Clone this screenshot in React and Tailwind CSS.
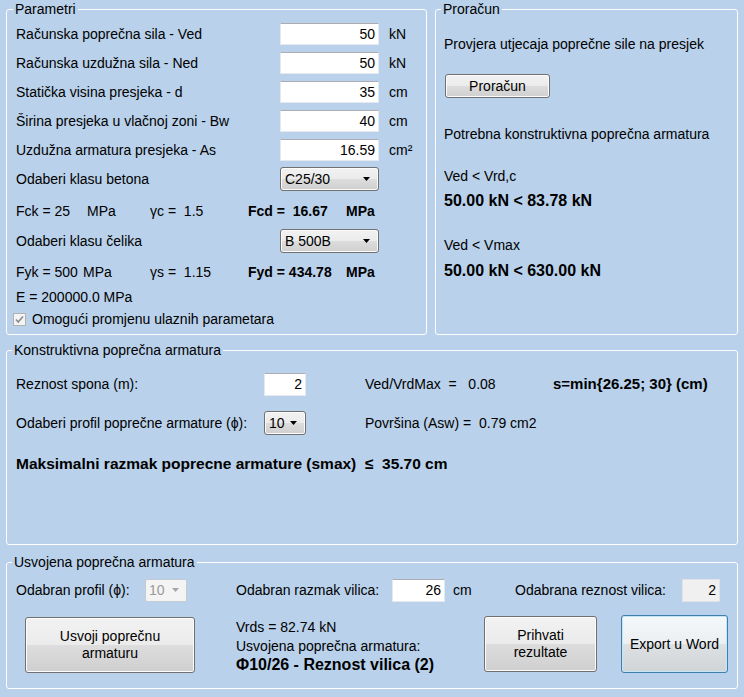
import React from "react";

const btn =
  "rounded-[3px] border border-[#707070] bg-[linear-gradient(to_bottom,#f2f2f2_0%,#ebebeb_50%,#dddddd_50%,#cfcfcf_100%)] shadow-[inset_0_0_0_1px_#fcfcfc]";

function Arrow({ grey }) {
  return (
    <svg width="7" height="4" viewBox="0 0 7 4">
      <path d="M0 0h7L3.5 4z" fill={grey ? "#a6a6a6" : "#000"} />
    </svg>
  );
}

function Combo({ value, className }) {
  return (
    <div className={`${btn} ${className} flex h-[24px] items-center justify-between pl-[4px] pr-[8px]`}>
      <span>{value}</span>
      <Arrow />
    </div>
  );
}

function Field({ value, className }) {
  return (
    <div
      className={`flex items-center justify-end border border-[#e3e9ef] border-t-[#abadb3] bg-white pr-[3px] ${className}`}
    >
      {value}
    </div>
  );
}

function Group({ title, className, legendClass, children }) {
  return (
    <fieldset className={`rounded-[3px] border border-white ${className}`}>
      <legend className={`px-[2px] leading-[16px] ${legendClass}`}>{title}</legend>
      {children}
    </fieldset>
  );
}

const params = [
  ["Računska poprečna sila - Ved", "50", "kN"],
  ["Računska uzdužna sila - Ned", "50", "kN"],
  ["Statička visina presjeka - d", "35", "cm"],
  ["Širina presjeka u vlačnoj zoni - Bw", "40", "cm"],
  ["Uzdužna armatura presjeka - As", "16.59", "cm²"],
];

export default function App() {
  return (
    <div className="h-[697px] w-[744px] overflow-hidden bg-[#b9d1ea] px-[6px] pt-[1px] font-['Liberation_Sans',Arial,sans-serif] text-[14px] leading-[16px] text-black">
      <div className="flex gap-[8px]">
        {/* Parametri */}
        <Group title="Parametri" className="h-[334px] w-[421px] pl-[9px]" legendClass="ml-[-3px]">
          <div className="mt-[2px]">
            {params.map(([label, val, unit]) => (
              <div key={label} className="flex h-[29px] items-center">
                <span className="w-[264px] whitespace-nowrap">{label}</span>
                <Field value={val} className="h-[22px] w-[99px]" />
                <span className="ml-[10px]">{unit}</span>
              </div>
            ))}
            <div className="flex h-[30px] items-center">
              <span className="w-[264px]">Odaberi klasu betona</span>
              <Combo value="C25/30" className="w-[99px]" />
            </div>
            <div className="flex h-[34px] items-center whitespace-pre">
              <span className="w-[71px]">Fck = 25</span>
              <span className="w-[63px]">MPa</span>
              <span className="w-[98px]">γc =  1.5</span>
              <span className="w-[98px] font-bold">Fcd =  16.67</span>
              <span className="font-bold">MPa</span>
            </div>
            <div className="flex h-[26px] items-center">
              <span className="w-[264px]">Odaberi klasu čelika</span>
              <Combo value="B 500B" className="w-[99px]" />
            </div>
            <div className="flex h-[36px] items-center whitespace-pre">
              <span className="w-[67px]">Fyk = 500</span>
              <span className="w-[67px]">MPa</span>
              <span className="w-[98px]">γs =  1.15</span>
              <span className="w-[98px] font-bold">Fyd = 434.78</span>
              <span className="font-bold">MPa</span>
            </div>
            <div className="flex h-[14px] items-center">E = 200000.0 MPa</div>
            <div className="flex h-[30px] items-center">
              <div className="ml-[-3px] flex h-[13px] w-[13px] items-center justify-center border border-[#b1b1b1] bg-[#f4f4f4]">
                <svg width="9" height="9" viewBox="0 0 9 9">
                  <path d="M1 4.5l2.2 2.5L8 1.5" fill="none" stroke="#8a8a8a" strokeWidth="1.6" />
                </svg>
              </div>
              <span className="ml-[6px]">Omogući promjenu ulaznih parametara</span>
            </div>
          </div>
        </Group>

        {/* Proračun */}
        <Group title="Proračun" className="h-[334px] w-[303px] pl-[8px]" legendClass="ml-[-3px]">
          <div className="mt-[19px]">Provjera utjecaja poprečne sile na presjek</div>
          <div className={`${btn} ml-[1px] mt-[22px] flex h-[24px] w-[105px] items-center justify-center`}>
            Proračun
          </div>
          <div className="mt-[28px]">Potrebna konstruktivna poprečna armatura</div>
          <div className="mt-[26px]">Ved &lt; Vrd,c</div>
          <div className="mt-[8px] text-[16px] font-bold leading-[18px]">50.00 kN &lt; 83.78 kN</div>
          <div className="mt-[27px]">Ved &lt; Vmax</div>
          <div className="mt-[9px] text-[16px] font-bold leading-[18px]">50.00 kN &lt; 630.00 kN</div>
        </Group>
      </div>

      {/* Konstruktivna */}
      <Group
        title="Konstruktivna poprečna armatura"
        className="mt-[7px] h-[203px] w-[732px] pl-[9px]"
        legendClass="ml-[-4px]"
      >
        <div className="mt-[13px] flex h-[26px] items-center whitespace-pre">
          <span className="w-[248px]">Reznost spona (m):</span>
          <Field value="2" className="h-[23px] w-[42px]" />
          <span className="ml-[59px] w-[188px]">Ved/VrdMax  =   0.08</span>
          <span className="text-[15px] font-bold">s=min{"{"}26.25; 30{"}"} (cm)</span>
        </div>
        <div className="mt-[13px] flex h-[26px] items-center whitespace-pre">
          <span className="w-[248px]">Odaberi profil poprečne armature (ϕ):</span>
          <Combo value="10" className="w-[42px]" />
          <span className="ml-[59px]">Površina (Asw) =  0.79 cm2</span>
        </div>
        <div className="mt-[18px] flex h-[20px] items-center whitespace-pre text-[15.5px] font-bold">
          Maksimalni razmak poprecne armature (smax)  ≤  35.70 cm
        </div>
      </Group>

      {/* Usvojena */}
      <Group
        title="Usvojena poprečna armatura"
        className="mt-[9px] h-[135px] w-[732px] pl-[9px]"
        legendClass="ml-[-4px]"
      >
        <div className="mt-[8px] flex h-[24px] items-center">
          <span className="w-[129px]">Odabran profil (ϕ):</span>
          <div className="flex h-[23px] w-[42px] items-center justify-between rounded-[2px] border border-[#c5cbd2] bg-[#f4f4f4] pl-[3px] pr-[7px] text-[#9a9a9a]">
            <span>10</span>
            <Arrow grey />
          </div>
          <span className="ml-[49px] w-[156px]">Odabran razmak vilica:</span>
          <Field value="26" className="h-[23px] w-[53px]" />
          <span className="ml-[8px] w-[62px]">cm</span>
          <span className="w-[167px]">Odabrana reznost vilica:</span>
          <div className="flex h-[23px] w-[38px] items-center justify-end border border-[#dfe3e8] bg-[#f0f0f0] pr-[3px]">
            2
          </div>
        </div>
        <div className="mt-[13px] flex items-start">
          <div
            className={`${btn} ml-[9px] mt-[2px] flex h-[56px] w-[170px] items-center justify-center text-center leading-[17px]`}
          >
            Usvoji poprečnu
            <br />
            armaturu
          </div>
          <div className="ml-[41px] w-[248px]">
            <div className="mt-[4px]">Vrds = 82.74 kN</div>
            <div className="mt-[3px]">Usvojena poprečna armatura:</div>
            <div className="mt-[2px] text-[16px] font-bold leading-[18px]">Φ10/26 - Reznost vilica (2)</div>
          </div>
          <div
            className={`${btn} mt-[1px] flex h-[56px] w-[113px] items-center justify-center text-center leading-[17px]`}
          >
            Prihvati
            <br />
            rezultate
          </div>
          <div className="ml-[24px] flex h-[58px] w-[107px] items-center justify-center rounded-[3px] border border-[#3c7fb1] bg-[linear-gradient(to_bottom,#f4f8fb_0%,#ebeff2_50%,#dde1e4_50%,#d0d4d7_100%)] shadow-[inset_0_0_0_1px_#c4e5f6]">
            Export u Word
          </div>
        </div>
      </Group>
    </div>
  );
}
